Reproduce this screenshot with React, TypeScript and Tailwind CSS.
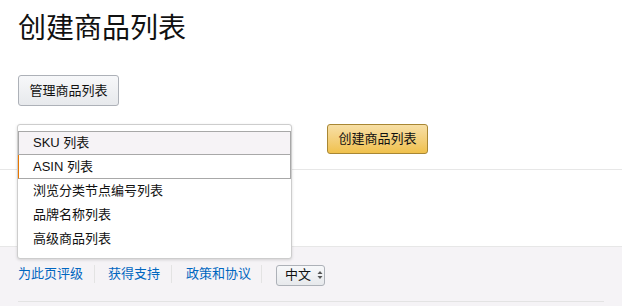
const font = { fontFamily: '"Liberation Sans", "Noto Sans CJK SC", sans-serif' }

function ListMenu() {
  return (
    <div className="absolute left-[-1px] top-0 z-10 w-[275px] h-[135px] rounded-[3px] border border-[#cdcdcd] bg-white pt-[6px] shadow-[0_1px_3px_rgba(0,0,0,0.15)]">
      <div className="h-[24px] flex items-center pl-[14px] bg-[#f6f3f6] border border-[#a8a8a8] text-[13px] text-[#111]">
        SKU 列表
      </div>
      <div className="h-[24px] flex items-center pl-[14px] border border-t-0 border-[#a8a8a8] border-l-[#e77600] text-[13px] text-[#111]">
        ASIN 列表
      </div>
      <div className="h-[24px] flex items-center pl-[15px] text-[13px] text-[#111]">浏览分类节点编号列表</div>
      <div className="h-[24px] flex items-center pl-[15px] text-[13px] text-[#111]">品牌名称列表</div>
      <div className="h-[24px] flex items-center pl-[15px] text-[13px] text-[#111]">高级商品列表</div>
    </div>
  )
}

export default function App() {
  return (
    <div className="w-[622px] h-[306px] bg-white overflow-hidden" style={font}>
      <div className="px-[18px]">
        <h1 className="pt-[15px] text-[28px] leading-[28px] text-[#111] font-normal">创建商品列表</h1>
        <button className="mt-[32px] h-[31px] w-[101px] rounded-[3px] border border-[#adb1b8] bg-gradient-to-b from-[#f7f8fa] to-[#e7e9ec] text-[13px] text-[#111]">
          管理商品列表
        </button>
      </div>

      <div className="mt-[18px] border-b border-[#e7e7e7] pb-[15px] px-[18px] flex items-start">
        <div className="relative w-[274px] h-[30px]">
          <ListMenu />
        </div>
        <button className="ml-[35px] h-[30px] w-[101px] rounded-[3px] border border-[#a88734] bg-gradient-to-b from-[#f7dfa5] to-[#f0c14b] text-[13px] text-[#111]">
          创建商品列表
        </button>
      </div>

      <div className="mt-[76px] h-[60px] border-t border-[#e7e7e7] bg-[#f5f3f6] px-[18px]">
        <div className="flex items-center h-[55px] border-b border-[#e3e3e3]">
          <a className="text-[13px] text-[#0066c0] pr-[11px] border-r border-[#e3e3e3] leading-[18px]">为此页评级</a>
          <a className="text-[13px] text-[#0066c0] pl-[13px] pr-[11px] border-r border-[#e3e3e3] leading-[18px]">获得支持</a>
          <a className="text-[13px] text-[#0066c0] pl-[14px] pr-[10px] border-r border-[#e3e3e3] leading-[18px]">政策和协议</a>
          <div className="ml-[14px] mt-[2px] h-[21px] w-[49px] rounded-[3px] border border-[#adb1b8] bg-gradient-to-b from-[#f7f8fa] to-[#e7e9ec] flex items-center pl-[8px] text-[13px] text-[#111]">
            中文
            <svg width="6" height="10" viewBox="0 0 6 10" className="ml-[6px]">
              <path d="M3 1 L5.5 4 H0.5 Z" fill="#555" />
              <path d="M3 9 L5.5 6 H0.5 Z" fill="#555" />
            </svg>
          </div>
        </div>
      </div>
    </div>
  )
}
